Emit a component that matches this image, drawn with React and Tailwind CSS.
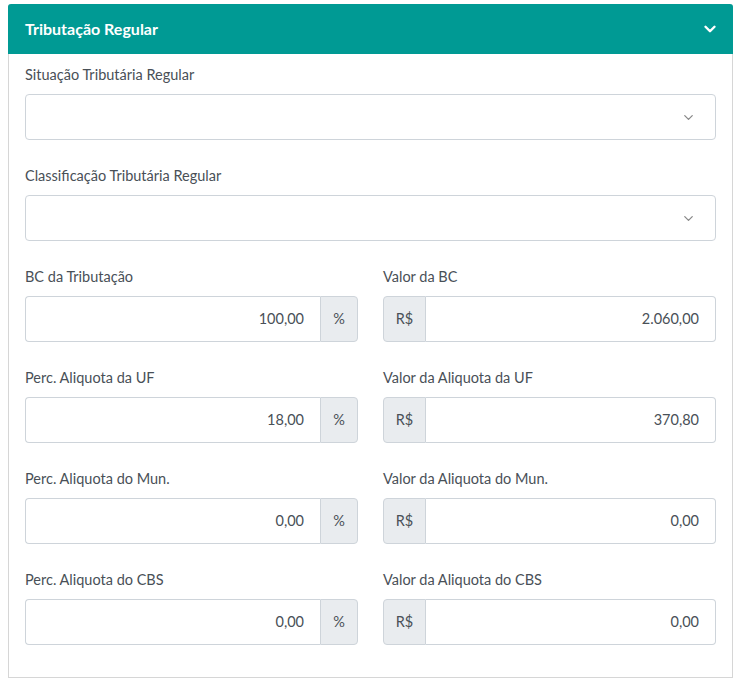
import { ChevronDown } from "lucide-react";

const font = { fontFamily: "Lato, 'Noto Sans', sans-serif" };

function SelectField({ label }) {
  return (
    <div className="flex flex-col">
      <label className="text-[14.5px] text-[#495057] leading-[20px] mb-[9px] pt-[1px]">{label}</label>
      <div className="h-[46px] border border-[#ced4da] rounded-[4px] bg-white flex items-center justify-end pr-[19px]">
        <ChevronDown size={15} strokeWidth={2} className="text-[#888]" />
      </div>
    </div>
  );
}

function NumberField({ label, value, addon, addonLeft }) {
  return (
    <div className="flex flex-col">
      <label className="text-[14.5px] text-[#495057] leading-[20px] mb-[9px] pt-[1px]">{label}</label>
      <div className="flex h-[46px]">
        {addonLeft && (
          <div className="w-[43px] flex items-center justify-center bg-[#e9ecef] border border-[#ced4da] rounded-l-[4px] text-[14.5px] text-[#495057]">
            {addon}
          </div>
        )}
        <div
          className={
            "flex-1 flex items-center justify-end pr-[16px] border border-[#ced4da] bg-white text-[14.5px] text-[#495057] " +
            (addonLeft ? "border-l-0 rounded-r-[4px]" : "border-r-0 rounded-l-[4px]")
          }
        >
          {value}
        </div>
        {!addonLeft && (
          <div className="w-[38px] flex items-center justify-center bg-[#e9ecef] border border-[#ced4da] rounded-r-[4px] text-[14.5px] text-[#495057]">
            {addon}
          </div>
        )}
      </div>
    </div>
  );
}

export default function App() {
  const rows = [
    ["BC da Tributação", "100,00", "Valor da BC", "2.060,00"],
    ["Perc. Aliquota da UF", "18,00", "Valor da Aliquota da UF", "370,80"],
    ["Perc. Aliquota do Mun.", "0,00", "Valor da Aliquota do Mun.", "0,00"],
    ["Perc. Aliquota do CBS", "0,00", "Valor da Aliquota do CBS", "0,00"],
  ];

  return (
    <div className="min-h-screen bg-white pt-[4px] pl-[8px] pr-[5px]" style={font}>
      <div className="border border-[#d6d6d6] border-t-0 rounded-t-[3px]">
        <div className="h-[50px] bg-[#009a94] -mx-[1px] rounded-t-[3px] flex items-center justify-between pl-[17px] pr-[14px]">
          <span className="text-white text-[16px] font-bold">Tributação Regular</span>
          <ChevronDown size={18} strokeWidth={3.2} className="text-white" />
        </div>
        <div className="px-[16px] pt-[10px] pb-[32px] flex flex-col gap-[25px]">
          <SelectField label="Situação Tributária Regular" />
          <SelectField label="Classificação Tributária Regular" />
          {rows.map((r) => (
            <div key={r[0]} className="grid grid-cols-2 gap-[25px]">
              <NumberField label={r[0]} value={r[1]} addon="%" />
              <NumberField label={r[2]} value={r[3]} addon="R$" addonLeft />
            </div>
          ))}
        </div>
      </div>
    </div>
  );
}
